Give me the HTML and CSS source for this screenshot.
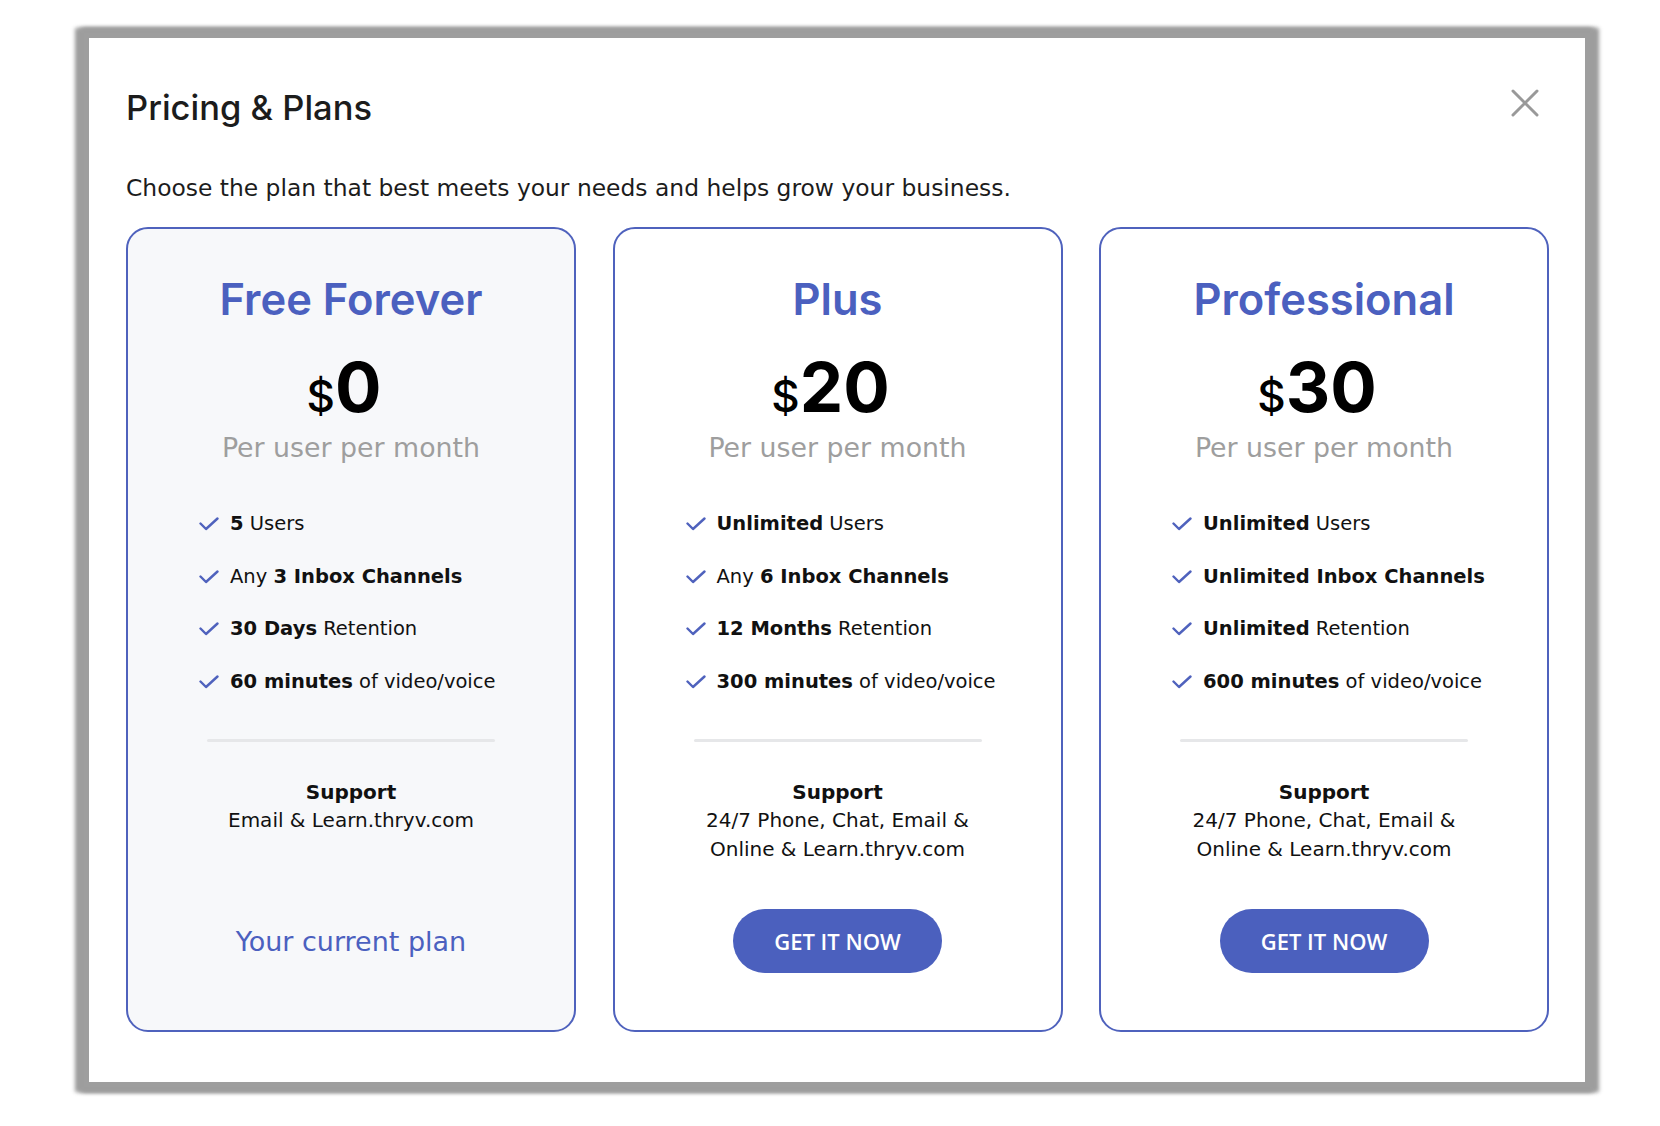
FILE: index.html
```html
<!DOCTYPE html>
<html lang="en">
<head>
<meta charset="utf-8">
<title>Pricing &amp; Plans</title>
<link rel="stylesheet" href="styles.css">
</head>
<body>
<div class="modal">
  <div class="modal-header">
    <h1 class="modal-title">Pricing &amp; Plans</h1>
    <button class="close" aria-label="Close">
      <svg viewBox="0 0 28 28" width="28" height="28"><path d="M2 2L26 26M26 2L2 26" fill="none" stroke="#999999" stroke-width="3" stroke-linecap="round"/></svg>
    </button>
  </div>
  <p class="subtitle">Choose the plan that best meets your needs and helps grow your business.</p>
  <div class="plans">
    <div class="plan plan-current">
      <h2 class="plan-name">Free Forever</h2>
      <div class="price"><span class="currency">$</span><span class="amount">0</span></div>
      <div class="period">Per user per month</div>
      <ul class="features">
        <li><svg class="check" viewBox="0 0 20 14"><path d="M1.5 6.5L7 12L18.5 1.5"/></svg><span><b>5</b> Users</span></li>
        <li><svg class="check" viewBox="0 0 20 14"><path d="M1.5 6.5L7 12L18.5 1.5"/></svg><span>Any <b>3 Inbox Channels</b></span></li>
        <li><svg class="check" viewBox="0 0 20 14"><path d="M1.5 6.5L7 12L18.5 1.5"/></svg><span><b>30 Days</b> Retention</span></li>
        <li><svg class="check" viewBox="0 0 20 14"><path d="M1.5 6.5L7 12L18.5 1.5"/></svg><span><b>60 minutes</b> of video/voice</span></li>
      </ul>
      <div class="divider"></div>
      <div class="support">
        <div class="support-title">Support</div>
        <div>Email &amp; Learn.thryv.com</div>
      </div>
      <div class="action"><span class="current">Your current plan</span></div>
    </div>
    <div class="plan">
      <h2 class="plan-name">Plus</h2>
      <div class="price"><span class="currency">$</span><span class="amount">20</span></div>
      <div class="period">Per user per month</div>
      <ul class="features">
        <li><svg class="check" viewBox="0 0 20 14"><path d="M1.5 6.5L7 12L18.5 1.5"/></svg><span><b>Unlimited</b> Users</span></li>
        <li><svg class="check" viewBox="0 0 20 14"><path d="M1.5 6.5L7 12L18.5 1.5"/></svg><span>Any <b>6 Inbox Channels</b></span></li>
        <li><svg class="check" viewBox="0 0 20 14"><path d="M1.5 6.5L7 12L18.5 1.5"/></svg><span><b>12 Months</b> Retention</span></li>
        <li><svg class="check" viewBox="0 0 20 14"><path d="M1.5 6.5L7 12L18.5 1.5"/></svg><span><b>300 minutes</b> of video/voice</span></li>
      </ul>
      <div class="divider"></div>
      <div class="support">
        <div class="support-title">Support</div>
        <div>24/7 Phone, Chat, Email &amp;</div>
        <div>Online &amp; Learn.thryv.com</div>
      </div>
      <div class="action"><button class="btn">GET IT NOW</button></div>
    </div>
    <div class="plan">
      <h2 class="plan-name">Professional</h2>
      <div class="price"><span class="currency">$</span><span class="amount">30</span></div>
      <div class="period">Per user per month</div>
      <ul class="features">
        <li><svg class="check" viewBox="0 0 20 14"><path d="M1.5 6.5L7 12L18.5 1.5"/></svg><span><b>Unlimited</b> Users</span></li>
        <li><svg class="check" viewBox="0 0 20 14"><path d="M1.5 6.5L7 12L18.5 1.5"/></svg><span><b>Unlimited Inbox Channels</b></span></li>
        <li><svg class="check" viewBox="0 0 20 14"><path d="M1.5 6.5L7 12L18.5 1.5"/></svg><span><b>Unlimited</b> Retention</span></li>
        <li><svg class="check" viewBox="0 0 20 14"><path d="M1.5 6.5L7 12L18.5 1.5"/></svg><span><b>600 minutes</b> of video/voice</span></li>
      </ul>
      <div class="divider"></div>
      <div class="support">
        <div class="support-title">Support</div>
        <div>24/7 Phone, Chat, Email &amp;</div>
        <div>Online &amp; Learn.thryv.com</div>
      </div>
      <div class="action"><button class="btn">GET IT NOW</button></div>
    </div>
  </div>
</div>
</body>
</html>
```

FILE: styles.css
```css
* { box-sizing: border-box; }

html, body {
  margin: 0;
  padding: 0;
  background: #ffffff;
}

body {
  font-family: "DejaVu Sans", "Inter", sans-serif;
  color: #1a1a1a;
  padding: 38px 0 44px 89px;
}

.modal {
  width: 1496px;
  height: 1044px;
  background: #ffffff;
  box-shadow: 0 0 4px 10px #9e9e9e, -4px 0 4px 10px #9e9e9e, 4px 0 4px 10px #9e9e9e;
  padding: 50px 36px 50px 37px;
  display: flex;
  flex-direction: column;
}

.modal-header {
  display: flex;
  align-items: center;
  justify-content: space-between;
  height: 40px;
}

.modal-title {
  margin: 0;
  font-family: "Inter", "DejaVu Sans", sans-serif;
  font-size: 34.5px;
  font-weight: 500;
  line-height: 40px;
  color: #1c1c1c;
}

.close {
  border: 0;
  background: none;
  padding: 0;
  margin: -10px 10px 0 0;
  width: 28px;
  height: 28px;
  display: flex;
}

.subtitle {
  margin: 45px 0 0;
  font-size: 23.4px;
  line-height: 30px;
  color: #1c1c1c;
}

.plans {
  margin-top: 24px;
  flex: 1;
  display: grid;
  grid-template-columns: repeat(3, 450px);
  justify-content: space-between;
}

.plan {
  border: 2px solid #4f62bd;
  border-radius: 22px;
  background: #ffffff;
  display: flex;
  flex-direction: column;
  align-items: center;
  padding: 44px 0 57px;
}

.plan-current {
  background: #f7f8fa;
}

.plan-name {
  margin: 0;
  font-family: "Inter", "DejaVu Sans", sans-serif;
  font-size: 43.5px;
  line-height: 52px;
  font-weight: 600;
  color: #4b60bf;
}

.price {
  margin-top: 22px;
  padding-right: 14px;
  display: flex;
  align-items: baseline;
  line-height: 80px;
  height: 80px;
  color: #000;
  font-family: "Inter", "DejaVu Sans", sans-serif;
}

.currency {
  font-size: 44px;
  font-weight: 500;
}

.amount {
  font-size: 69px;
  font-weight: 700;
}

.period {
  margin-top: 5px;
  font-size: 26.8px;
  line-height: 32px;
  color: #9e9e9e;
}

.features {
  list-style: none;
  align-self: stretch;
  margin: 46px 0 0;
  padding: 0 0 0 71px;
  display: flex;
  flex-direction: column;
  gap: 24.67px;
}

.features li {
  display: flex;
  align-items: center;
  height: 28px;
  font-size: 19.5px;
  line-height: 28px;
  color: #111;
}

.features b {
  font-weight: 700;
}

.check {
  width: 20px;
  height: 14px;
  margin-right: 11px;
  flex: none;
}

.check path {
  fill: none;
  stroke: #4f62bd;
  stroke-width: 2.4;
  stroke-linecap: round;
  stroke-linejoin: round;
}

.divider {
  margin-top: 43px;
  width: 288px;
  height: 3px;
  border-radius: 2px;
  background: #e6e7e9;
}

.support {
  margin-top: 36px;
  text-align: center;
  font-size: 20px;
  line-height: 28.5px;
  color: #111;
}

.support-title {
  font-weight: 700;
}

.action {
  margin-top: auto;
  height: 64px;
  display: flex;
  align-items: center;
  justify-content: center;
}

.current {
  font-size: 27px;
  color: #4b60bf;
}

.btn {
  width: 209px;
  height: 64px;
  border: 0;
  border-radius: 32px;
  background: #4b60be;
  color: #ffffff;
  font-family: "Open Sans", "Noto Sans", sans-serif;
  font-size: 22px;
  font-weight: 600;
  padding: 0;
}
```
